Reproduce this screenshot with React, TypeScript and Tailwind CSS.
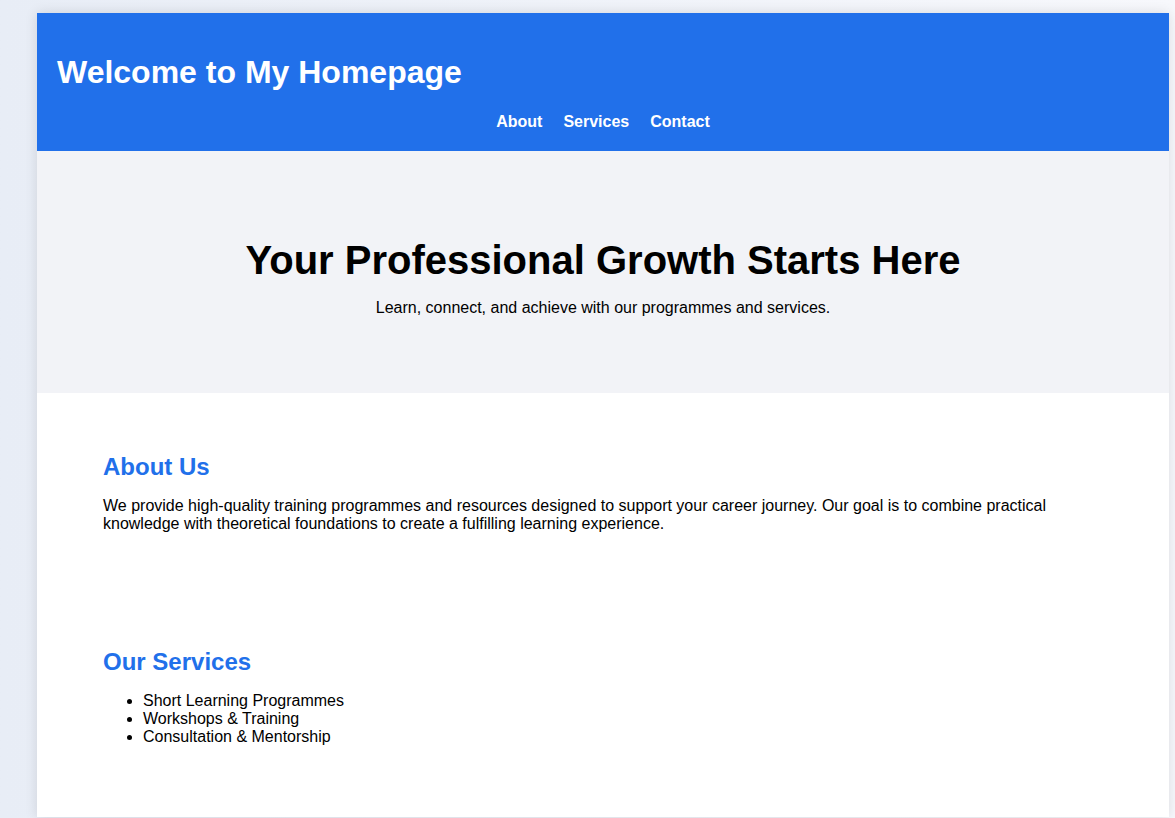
import React from "react";

export default function App() {
  return (
    <div
      className="min-h-[818px] w-full bg-gradient-to-r from-[#e8edf6] to-[#f7f8fc] pl-[37px] pt-[13px] text-black"
      style={{ fontFamily: '"Liberation Sans", Arial, sans-serif' }}
    >
      <div className="w-[1132px] bg-white shadow-[0_0_12px_rgba(0,0,0,0.12)]">
        <header className="bg-[#2170ea] px-5 pt-[41px] pb-[20px] text-white">
          <h1 className="text-[32px] font-bold leading-[37px]">Welcome to My Homepage</h1>
          <nav className="mt-[22px] flex justify-center gap-[21px] text-base font-bold leading-[18px]">
            <a>About</a>
            <a>Services</a>
            <a>Contact</a>
          </nav>
        </header>
        <section className="bg-[#f2f3f7] pt-[86px] pb-[76px] text-center">
          <h2 className="text-[40px] font-bold leading-[46px]">Your Professional Growth Starts Here</h2>
          <p className="mt-[16px] text-base leading-[18px]">
            Learn, connect, and achieve with our programmes and services.
          </p>
        </section>
        <section className="px-[66px] pt-[60px]">
          <h2 className="text-2xl font-bold leading-[28px] text-[#2170ea]">About Us</h2>
          <p className="mt-[16px] text-base leading-[18px]">
            We provide high-quality training programmes and resources designed to support your career journey. Our goal is to combine practical knowledge with theoretical foundations to create a fulfilling learning experience.
          </p>
        </section>
        <section className="px-[66px] pt-[115px] pb-[71px]">
          <h2 className="text-2xl font-bold leading-[28px] text-[#2170ea]">Our Services</h2>
          <ul className="mt-[16px] list-disc pl-10 text-base leading-[18px]">
            <li>Short Learning Programmes</li>
            <li>Workshops &amp; Training</li>
            <li>Consultation &amp; Mentorship</li>
          </ul>
        </section>
      </div>
    </div>
  );
}
